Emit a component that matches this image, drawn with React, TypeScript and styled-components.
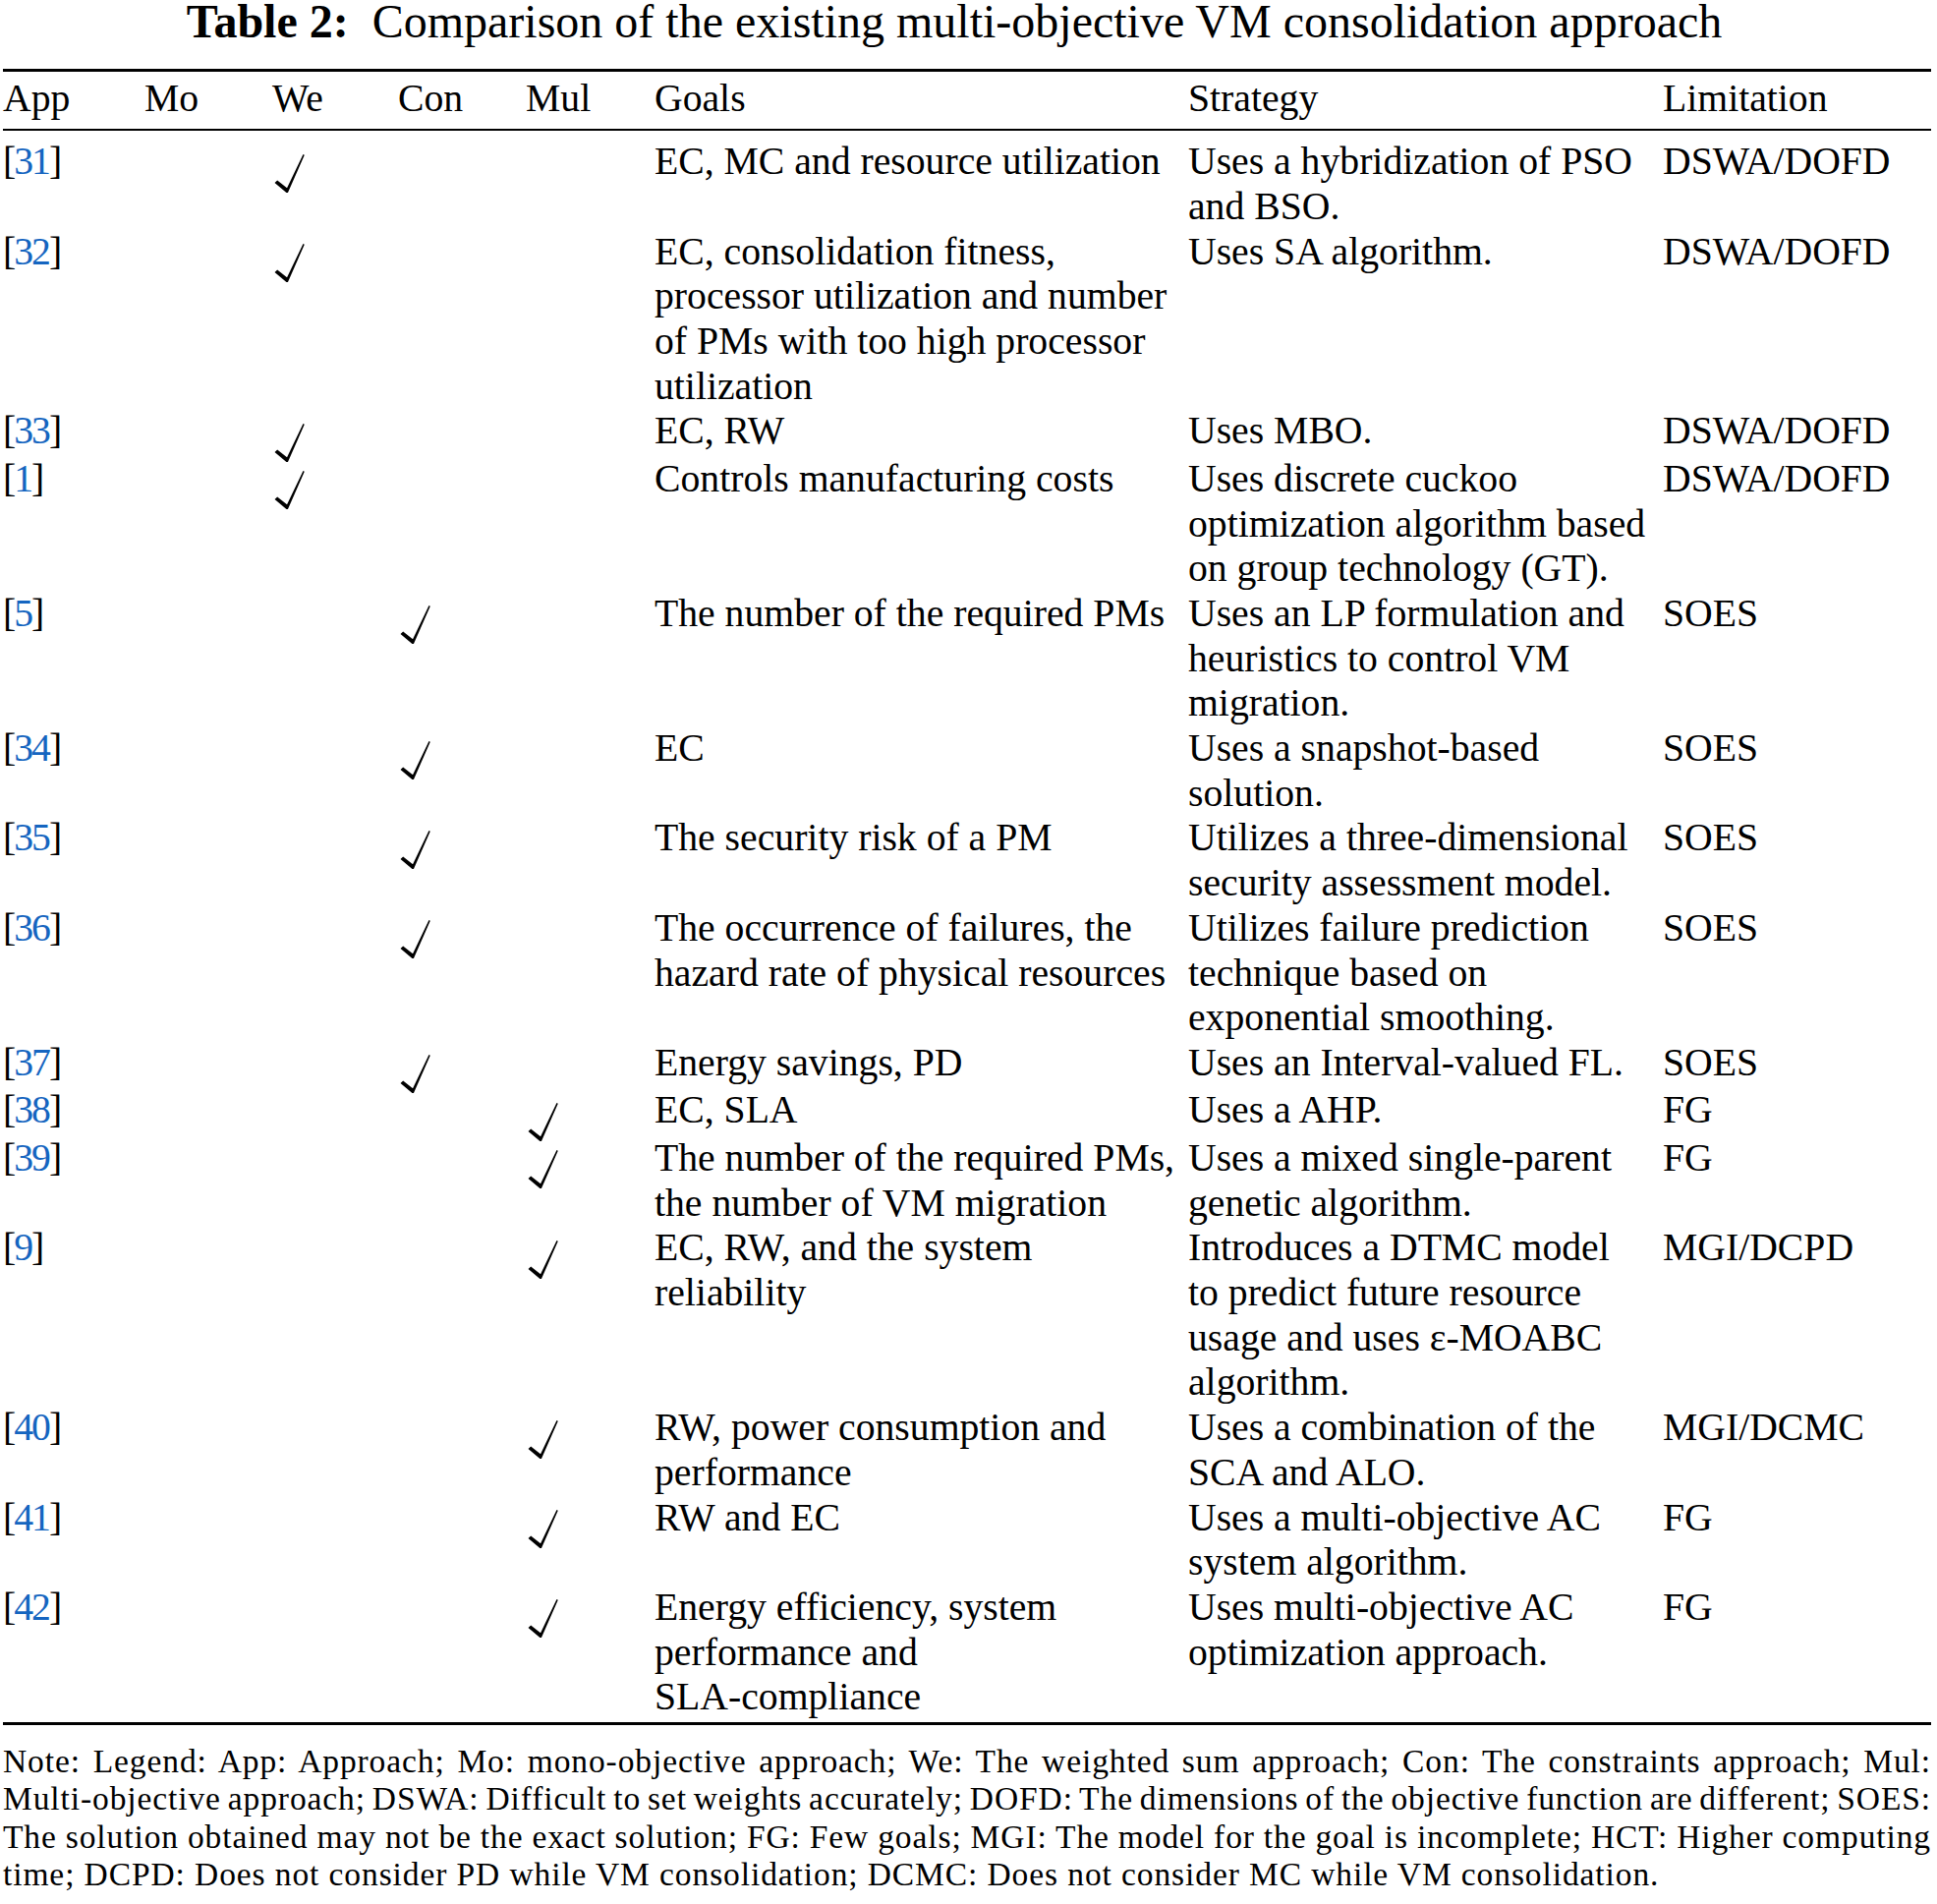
import React from "react";
import styled, { createGlobalStyle } from "styled-components";

const GlobalStyle = createGlobalStyle`
  html, body { margin: 0; padding: 0; background: #ffffff; }
  body { font-family: "Liberation Serif", "Times New Roman", serif; color: #000000; }
`;

const COLS = "144px 130px 128px 130px 131px 543px 483px 1fr";

const Page = styled.div`
  width: 1962px;
  padding: 0 6px 0 3px;
`;

const Title = styled.h1`
  margin: 0;
  font-size: 48px;
  line-height: 44px;
  font-weight: normal;
  text-align: center;
  white-space: nowrap;
  padding-right: 26px;
`;

const TitleLabel = styled.b`
  font-weight: bold;
  margin-right: 24px;
`;

const Rule = styled.div<{ $weight: number; $gap?: number }>`
  height: ${(p) => p.$weight}px;
  background: #000000;
  margin-top: ${(p) => p.$gap ?? 0}px;
`;

const Table = styled.div`
  font-size: 39.7px;
  line-height: 45.7px;
`;

const Row = styled.div`
  display: grid;
  grid-template-columns: ${COLS};
`;

const HeadRow = styled(Row)`
  padding: 5px 0 7px;
`;

const Body = styled.div`
  padding: 9.4px 0 2px;
`;

const Cell = styled.div`
  min-width: 0;
`;

const AppCell = styled(Cell)`
  letter-spacing: -2px;
`;

const CheckCell = styled.div`
  min-height: 48.5px;
`;

const Line = styled.div`
  white-space: nowrap;
`;

const Ref = styled.span`
  color: #1565c0;
`;

const CheckSvg = styled.svg`
  display: block;
  width: 31px;
  height: 39px;
  margin: 14.5px 0 -5px 1.5px;
`;

const Note = styled.div`
  margin-top: 18px;
  font-size: 33.5px;
  line-height: 38.3px;
  letter-spacing: 0.9px;
`;

const NoteLine = styled.div<{ $last?: boolean }>`
  white-space: nowrap;
  text-align: ${(p) => (p.$last ? "left" : "justify")};
  text-align-last: ${(p) => (p.$last ? "left" : "justify")};
  word-spacing: ${(p) => (p.$last ? "0px" : "-4px")};
`;

const Check = () => (
  <CheckSvg viewBox="0 0 30 38" aria-hidden="true">
    <path d="M0.4 28.2 L3 25.8 L12.6 33.4 L28.6 0 L29.9 0.7 L13.5 38 L12 38 Z" fill="#000" />
  </CheckSvg>
);

type Kind = "we" | "con" | "mul";

interface Entry {
  ref: string;
  kind: Kind;
  goals: string[];
  strategy: string[];
  limitation: string;
}

const rows: Entry[] = [
  { ref: "31", kind: "we", goals: ["EC, MC and resource utilization"], strategy: ["Uses a hybridization of PSO", "and BSO."], limitation: "DSWA/DOFD" },
  { ref: "32", kind: "we", goals: ["EC, consolidation fitness,", "processor utilization and number", "of PMs with too high processor", "utilization"], strategy: ["Uses SA algorithm."], limitation: "DSWA/DOFD" },
  { ref: "33", kind: "we", goals: ["EC, RW"], strategy: ["Uses MBO."], limitation: "DSWA/DOFD" },
  { ref: "1", kind: "we", goals: ["Controls manufacturing costs"], strategy: ["Uses discrete cuckoo", "optimization algorithm based", "on group technology (GT)."], limitation: "DSWA/DOFD" },
  { ref: "5", kind: "con", goals: ["The number of the required PMs"], strategy: ["Uses an LP formulation and", "heuristics to control VM", "migration."], limitation: "SOES" },
  { ref: "34", kind: "con", goals: ["EC"], strategy: ["Uses a snapshot-based", "solution."], limitation: "SOES" },
  { ref: "35", kind: "con", goals: ["The security risk of a PM"], strategy: ["Utilizes a three-dimensional", "security assessment model."], limitation: "SOES" },
  { ref: "36", kind: "con", goals: ["The occurrence of failures, the", "hazard rate of physical resources"], strategy: ["Utilizes failure prediction", "technique based on", "exponential smoothing."], limitation: "SOES" },
  { ref: "37", kind: "con", goals: ["Energy savings, PD"], strategy: ["Uses an Interval-valued FL."], limitation: "SOES" },
  { ref: "38", kind: "mul", goals: ["EC, SLA"], strategy: ["Uses a AHP."], limitation: "FG" },
  { ref: "39", kind: "mul", goals: ["The number of the required PMs,", "the number of VM migration"], strategy: ["Uses a mixed single-parent", "genetic algorithm."], limitation: "FG" },
  { ref: "9", kind: "mul", goals: ["EC, RW, and the system", "reliability"], strategy: ["Introduces a DTMC model", "to predict future resource", "usage and uses \u03b5-MOABC", "algorithm."], limitation: "MGI/DCPD" },
  { ref: "40", kind: "mul", goals: ["RW, power consumption and", "performance"], strategy: ["Uses a combination of the", "SCA and ALO."], limitation: "MGI/DCMC" },
  { ref: "41", kind: "mul", goals: ["RW and EC"], strategy: ["Uses a multi-objective AC", "system algorithm."], limitation: "FG" },
  { ref: "42", kind: "mul", goals: ["Energy efficiency, system", "performance and", "SLA-compliance"], strategy: ["Uses multi-objective AC", "optimization approach."], limitation: "FG" },
];

const headers = ["App", "Mo", "We", "Con", "Mul", "Goals", "Strategy", "Limitation"];

const noteLines = [
  "Note: Legend: App: Approach; Mo: mono-objective approach; We: The weighted sum approach; Con: The constraints approach; Mul:",
  "Multi-objective approach; DSWA: Difficult to set weights accurately; DOFD: The dimensions of the objective function are different; SOES:",
  "The solution obtained may not be the exact solution; FG: Few goals; MGI: The model for the goal is incomplete; HCT: Higher computing",
  "time; DCPD: Does not consider PD while VM consolidation; DCMC: Does not consider MC while VM consolidation.",
];

const Lines = ({ items }: { items: string[] }) => (
  <Cell>
    {items.map((t, i) => (
      <Line key={i}>{t}</Line>
    ))}
  </Cell>
);

const Mark = ({ on }: { on: boolean }) => <CheckCell>{on ? <Check /> : null}</CheckCell>;

export default function App() {
  return (
    <Page>
      <GlobalStyle />
      <Title>
        <TitleLabel>Table 2:</TitleLabel>Comparison of the existing multi-objective VM consolidation approach
      </Title>
      <Rule $weight={3} $gap={26} />
      <Table>
        <HeadRow>
          {headers.map((h) => (
            <Cell key={h}>{h}</Cell>
          ))}
        </HeadRow>
        <Rule $weight={2} />
        <Body>
          {rows.map((r) => (
            <Row key={r.ref}>
              <AppCell>
                [<Ref>{r.ref}</Ref>]
              </AppCell>
              <Cell />
              <Mark on={r.kind === "we"} />
              <Mark on={r.kind === "con"} />
              <Mark on={r.kind === "mul"} />
              <Lines items={r.goals} />
              <Lines items={r.strategy} />
              <Cell>{r.limitation}</Cell>
            </Row>
          ))}
        </Body>
      </Table>
      <Rule $weight={3} />
      <Note>
        {noteLines.map((t, i) => (
          <NoteLine key={i} $last={i === noteLines.length - 1}>
            {t}
          </NoteLine>
        ))}
      </Note>
    </Page>
  );
}
